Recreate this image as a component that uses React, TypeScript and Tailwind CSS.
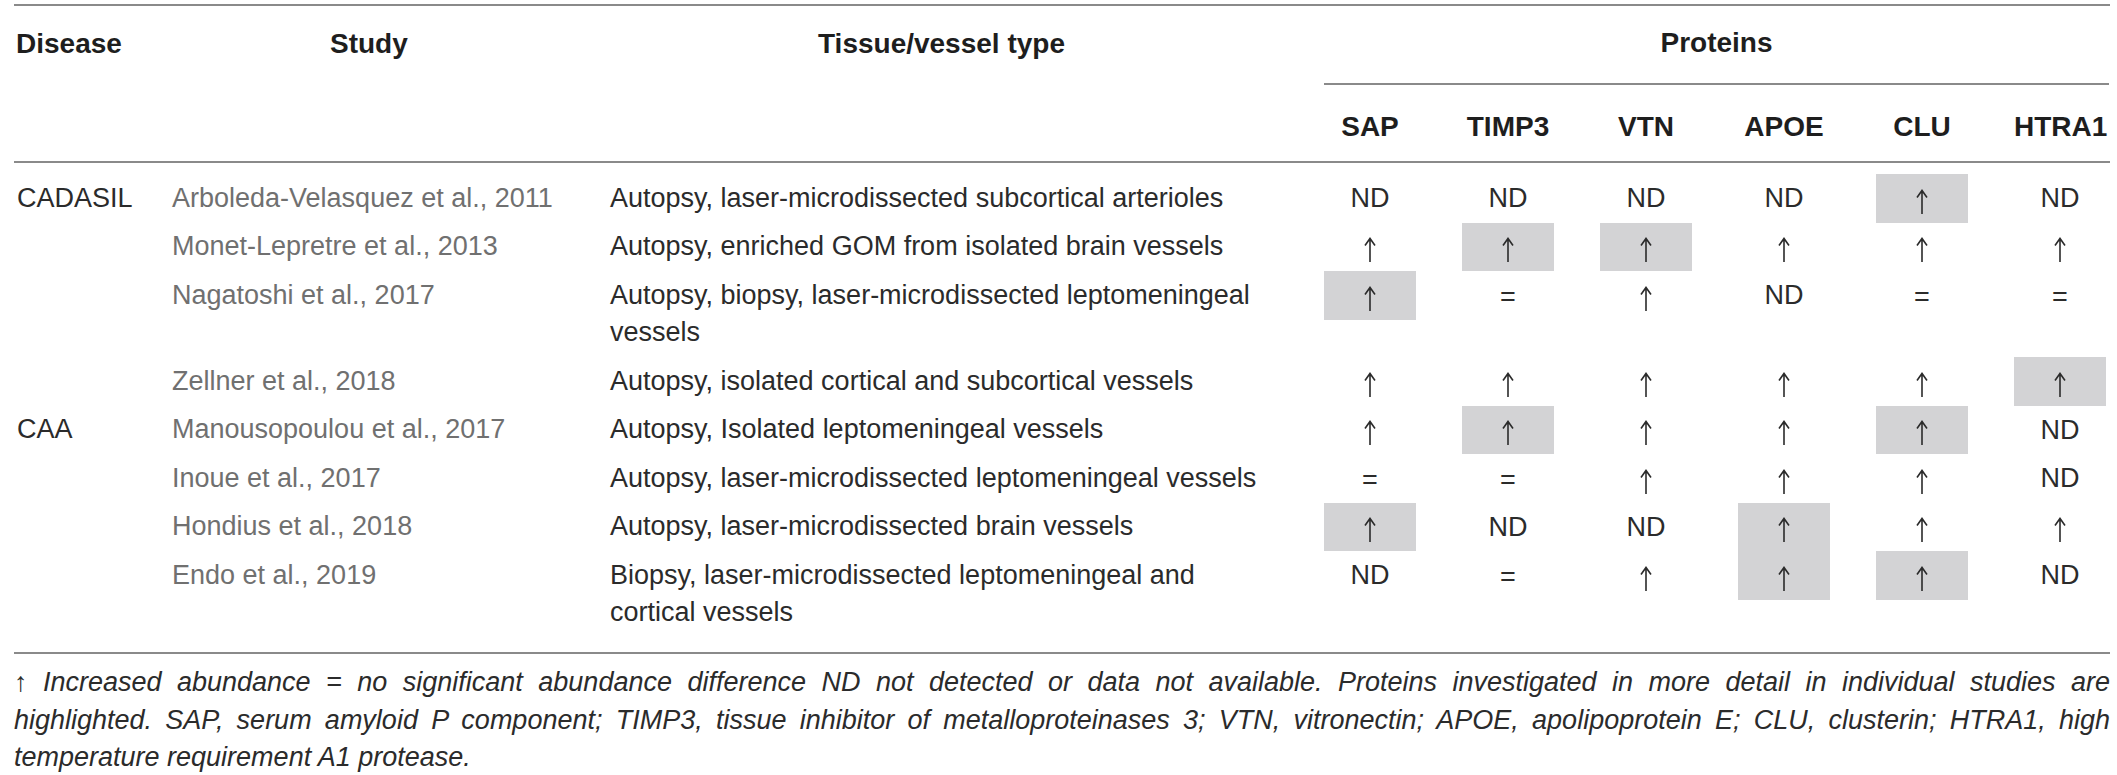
const grid =
  "grid grid-cols-[158px_438px_691px_138px_138px_138px_138px_138px_119px]";

type Val = "up" | "eq" | "ND";
type Cell = { v: Val; hl?: boolean };

const parse = (s: string): Cell[] =>
  s.split(" ").map((t) => ({
    v: t.replace("*", "") as Val,
    hl: t.endsWith("*"),
  }));

const proteins = ["SAP", "TIMP3", "VTN", "APOE", "CLU", "HTRA1"];

const rows = [
  {
    disease: "CADASIL",
    study: "Arboleda-Velasquez et al., 2011",
    tissue: "Autopsy, laser-microdissected subcortical arterioles",
    cells: parse("ND ND ND ND up* ND"),
  },
  {
    disease: "",
    study: "Monet-Lepretre et al., 2013",
    tissue: "Autopsy, enriched GOM from isolated brain vessels",
    cells: parse("up up* up* up up up"),
  },
  {
    disease: "",
    study: "Nagatoshi et al., 2017",
    tissue: "Autopsy, biopsy, laser-microdissected leptomeningeal vessels",
    cells: parse("up* eq up ND eq eq"),
  },
  {
    disease: "",
    study: "Zellner et al., 2018",
    tissue: "Autopsy, isolated cortical and subcortical vessels",
    cells: parse("up up up up up up*"),
  },
  {
    disease: "CAA",
    study: "Manousopoulou et al., 2017",
    tissue: "Autopsy, Isolated leptomeningeal vessels",
    cells: parse("up up* up up up* ND"),
  },
  {
    disease: "",
    study: "Inoue et al., 2017",
    tissue: "Autopsy, laser-microdissected leptomeningeal vessels",
    cells: parse("eq eq up up up ND"),
  },
  {
    disease: "",
    study: "Hondius et al., 2018",
    tissue: "Autopsy, laser-microdissected brain vessels",
    cells: parse("up* ND ND up* up up"),
  },
  {
    disease: "",
    study: "Endo et al., 2019",
    tissue: "Biopsy, laser-microdissected leptomeningeal and cortical vessels",
    cells: parse("ND eq up up* up* ND"),
  },
];

// thin "increased" arrow as in the printed table
function UpArrow() {
  return (
    <svg width="14" height="25" viewBox="0 0 14 25" className="mt-[6px]" aria-label="↑">
      <path d="M7 1.5V25M2 8.5L7 1.5L12 8.5" fill="none" stroke="#2b2b2b" strokeWidth="1.6" />
    </svg>
  );
}

function Value({ cell }: { cell: Cell }) {
  return (
    <div
      className={`ml-[23px] w-[92px] h-[48.5px] flex items-center justify-center ${
        cell.hl ? "bg-[#d3d3d5]" : ""
      }`}
    >
      {cell.v === "ND" && <span>ND</span>}
      {cell.v === "eq" && <span className="pt-1">=</span>}
      {cell.v === "up" && <UpArrow />}
    </div>
  );
}

export default function App() {
  return (
    <div className="w-[2117px] h-[775px] overflow-hidden bg-white pl-[14px] pt-[4px] font-['Liberation_Sans',Arial,sans-serif] text-[#2b2b2b]">
      <div className="w-[2096px] border-t-2 border-[#8a8a8a]">
        {/* Header */}
        <div className={`${grid} border-b-2 border-[#8a8a8a] text-[28px] font-bold leading-none text-[#1e1e1e]`}>
          <div className="row-span-2 pt-[24px] pl-[2px]">Disease</div>
          <div className="row-span-2 pt-[24px] pl-[158px]">Study</div>
          <div className="row-span-2 pt-[24px] pl-[208px]">Tissue/vessel type</div>
          <div className="col-span-6">
            <div className="ml-[23px] w-[785px] h-[79px] pb-[3px] flex items-center justify-center border-b-2 border-[#8a8a8a]">
              Proteins
            </div>
          </div>
          {proteins.map((p) => (
            <div key={p} className="h-[76px] pt-[8px] flex items-center">
              <div className="ml-[23px] w-[92px] text-center">{p}</div>
            </div>
          ))}
        </div>

        {/* Body */}
        <div className="pt-[11px] pb-[15px] border-b-2 border-[#8a8a8a] text-[27px]">
          {rows.map((r) => (
            <div key={r.study} className={`${grid} items-start`}>
              <div className="py-[5.5px] leading-[37.5px] pl-[3px]">{r.disease}</div>
              <div className="py-[5.5px] leading-[37.5px] text-[#707070]">{r.study}</div>
              <div className="py-[5.5px] leading-[37.5px] pr-[30px]">{r.tissue}</div>
              {r.cells.map((c, i) => (
                <Value key={i} cell={c} />
              ))}
            </div>
          ))}
        </div>

        {/* Footnote */}
        <div className="pt-[10px] text-[27px] italic leading-[37.5px] text-[#2b2b2b]">
          <div className="whitespace-nowrap text-justify [text-align-last:justify]">
            ↑ Increased abundance = no significant abundance difference ND not detected or data not available. Proteins investigated in more detail in individual studies are
          </div>
          <div className="whitespace-nowrap text-justify [text-align-last:justify]">
            highlighted. SAP, serum amyloid P component; TIMP3, tissue inhibitor of metalloproteinases 3; VTN, vitronectin; APOE, apolipoprotein E; CLU, clusterin; HTRA1, high
          </div>
          <div>temperature requirement A1 protease.</div>
        </div>
      </div>
    </div>
  );
}
